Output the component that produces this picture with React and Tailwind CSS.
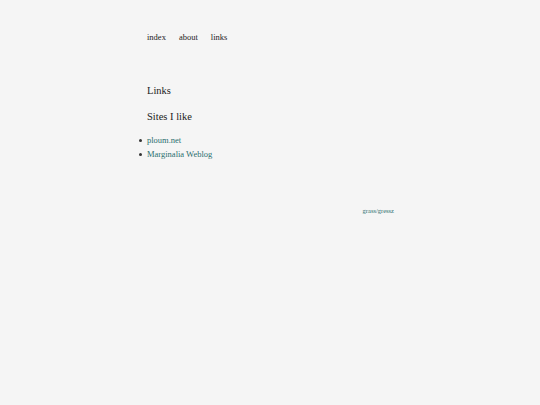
const sites = ['ploum.net', 'Marginalia Weblog'];

export default function App() {
  return (
    <div className="min-h-[405px] w-full bg-[#f5f5f5] text-[#222] font-['Liberation_Serif',serif]">
      <div className="ml-[147px] w-[247px] pt-[31px]">
        <nav className="flex gap-[13px] text-[8.5px] leading-[12px] text-[#222]">
          <a>index</a>
          <a>about</a>
          <a>links</a>
        </nav>
        <h1 className="mt-[41px] text-[10.5px] leading-[14px]">Links</h1>
        <h2 className="mt-[12px] text-[10.5px] leading-[14px]">Sites I like</h2>
        <ul className="mt-[9px] -ml-[8px] text-[8.5px] leading-[14px]">
          {sites.map((s) => (
            <li key={s} className="flex items-center">
              <span className="mr-[5px] h-[3px] w-[3px] rounded-full bg-[#333]" />
              <a className="text-[#2b6f6f]">{s}</a>
            </li>
          ))}
        </ul>
        <footer className="mt-[46px] text-right text-[6.5px] leading-[8px] text-[#2b6f6f]">
          grass/gressz
        </footer>
      </div>
    </div>
  );
}
